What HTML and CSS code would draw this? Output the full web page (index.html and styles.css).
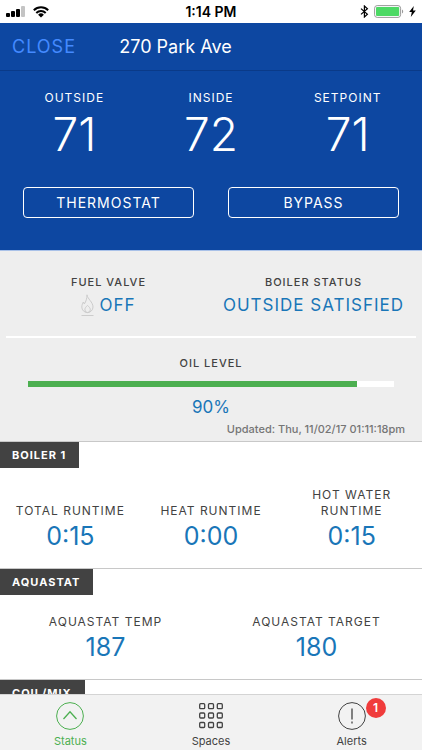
FILE: index.html
```html
<!DOCTYPE html>
<html lang="en">
<head>
    <meta charset="UTF-8">
    <meta name="viewport" content="width=device-width, initial-scale=1.0">
    <title>270 Park Ave</title>
    <link rel="stylesheet" href="styles.css">
</head>
<body>
    <div class="status-bar">
        <div class="status-left">
            <svg width="19" height="12" viewBox="0 0 19 12">
                <rect x="0" y="7" width="4" height="4" rx="1"/>
                <rect x="5" y="5" width="4" height="6" rx="1"/>
                <rect x="10" y="3" width="4" height="8" rx="1"/>
                <rect x="15" y="0" width="4" height="11" rx="1" fill="#c4c4c4"/>
            </svg>
            <svg width="16" height="12" viewBox="0 0 16 12" fill="none" stroke="currentColor" stroke-width="2">
                <path d="M.8 4.3a10.3 10.3 0 0114.4 0"/>
                <path d="M3.3 7a6.7 6.7 0 019.4 0"/>
                <path d="M8 11.6L5.1 8.7a4.1 4.1 0 015.8 0z" fill="currentColor" stroke="none"/>
            </svg>
        </div>
        <span class="status-time">1:14 PM</span>
        <div class="status-right">
            <svg width="9" height="13" viewBox="0 0 9 13" fill="none" stroke="currentColor" stroke-width="1.2">
                <path d="M1 3.6l6.4 5.6-3 2.8V1l3 2.8L1 9.4"/>
            </svg>
            <svg width="30" height="13" viewBox="0 0 30 13">
                <rect x=".6" y=".6" width="26" height="11.8" rx="2.6" fill="#fff" stroke="#999" stroke-width="1"/>
                <rect x="2" y="2" width="23.2" height="9" rx="1" fill="#4cd964"/>
                <path d="M28 4.5c1.6.6 1.6 3.4 0 4z" fill="#999"/>
            </svg>
            <svg width="7" height="11" viewBox="0 0 7 11">
                <path d="M4.8 0L.2 6h2.6L1.8 11 6.8 4.6H4z"/>
            </svg>
        </div>
    </div>

    <header>
        <button class="close-button">CLOSE</button>
        <h1 class="app-title">270 Park Ave</h1>
    </header>

    <main>
        <section class="temps">
            <div class="temps-row">
                <div class="temp">
                    <span class="label">OUTSIDE</span>
                    <span class="temp-value">71</span>
                </div>
                <div class="temp">
                    <span class="label">INSIDE</span>
                    <span class="temp-value">72</span>
                </div>
                <div class="temp">
                    <span class="label">SETPOINT</span>
                    <span class="temp-value">71</span>
                </div>
            </div>
            <div class="temps-buttons">
                <button class="outline-button">THERMOSTAT</button>
                <button class="outline-button">BYPASS</button>
            </div>
        </section>

        <section class="system">
            <div class="system-row">
                <div class="system-item">
                    <span class="label-small">FUEL VALVE</span>
                    <span class="system-value">
                        <svg width="13" height="23" viewBox="0 0 13 23" fill="none" stroke="#cccccc">
                            <path d="M6 .8C6.400 4.800 12 8 12 13a5.600 5.600 0 01-11.200 0c0-2.200 1-3.600 1.500-5 .5.6.8 1.200 1 2C5 7.500 6 4.500 6 .8z"/>
                            <path d="M6.500 11.500c-1.500 1.200-2.600 2.500-2.600 4.300a2.700 2.700 0 005.400 0c0-1.800-1.300-3.100-2.800-4.300z"/>
                            <path d="M.5 21.500h12"/>
                        </svg>
                        OFF
                    </span>
                </div>
                <div class="system-item">
                    <span class="label-small">BOILER STATUS</span>
                    <span class="system-value">OUTSIDE SATISFIED</span>
                </div>
            </div>

            <div class="oil">
                <span class="label-small">OIL LEVEL</span>
                <div class="oil-bar">
                    <div class="oil-fill" style="width: 90%"></div>
                </div>
                <span class="oil-value">90%</span>
            </div>
            <p class="updated">Updated: Thu, 11/02/17 01:11:18pm</p>
        </section>

        <section class="panel">
            <h2 class="panel-tag">BOILER 1</h2>
            <div class="panel-row">
                <div class="stat">
                    <span class="label">TOTAL RUNTIME</span>
                    <span class="stat-value">0:15</span>
                </div>
                <div class="stat">
                    <span class="label">HEAT RUNTIME</span>
                    <span class="stat-value">0:00</span>
                </div>
                <div class="stat">
                    <span class="label">HOT WATER RUNTIME</span>
                    <span class="stat-value">0:15</span>
                </div>
            </div>
        </section>

        <section class="panel">
            <h2 class="panel-tag">AQUASTAT</h2>
            <div class="panel-row panel-row-wide">
                <div class="stat">
                    <span class="label">AQUASTAT TEMP</span>
                    <span class="stat-value">187</span>
                </div>
                <div class="stat">
                    <span class="label">AQUASTAT TARGET</span>
                    <span class="stat-value">180</span>
                </div>
            </div>
        </section>

        <section class="panel">
            <h2 class="panel-tag">COIL/MIX</h2>
        </section>
    </main>

    <nav class="tabs">
        <a href="#status" class="tab tab-active">
            <svg width="28" height="28" viewBox="0 0 28 28" fill="none" stroke="currentColor">
                <circle cx="14" cy="14" r="13.400"/>
                <path d="M7.500 17L14 9.800 20.500 17" stroke-width="1.300"/>
            </svg>
            Status
        </a>
        <a href="#spaces" class="tab">
            <svg width="28" height="28" viewBox="0 0 28 28" fill="none" stroke="currentColor" stroke-width="1.300">
                <rect x="2.700" y="1.700" width="5" height="5" rx="1"/>
                <rect x="11.500" y="1.700" width="5" height="5" rx="1"/>
                <rect x="20.300" y="1.700" width="5" height="5" rx="1"/>
                <rect x="2.700" y="11" width="5" height="5" rx="1"/>
                <rect x="11.500" y="11" width="5" height="5" rx="1"/>
                <rect x="20.300" y="11" width="5" height="5" rx="1"/>
                <rect x="2.700" y="20.500" width="5" height="5" rx="1"/>
                <rect x="11.500" y="20.500" width="5" height="5" rx="1"/>
                <rect x="20.300" y="20.500" width="5" height="5" rx="1"/>
            </svg>
            Spaces
        </a>
        <a href="#alerts" class="tab">
            <span class="tab-icon">
                <svg width="28" height="28" viewBox="0 0 28 28" fill="none" stroke="currentColor">
                    <circle cx="14" cy="14" r="13.400"/>
                    <path d="M14 6.500v11M14 19.500v2" stroke-width="1.300"/>
                </svg>
                <span class="badge">1</span>
            </span>
            Alerts
        </a>
    </nav>
</body>
</html>
```

FILE: styles.css
```css
* {
    margin: 0;
    padding: 0;
    box-sizing: border-box;
}

body {
    font-family: Inter, 'Liberation Sans', sans-serif;
    background-color: white;
    color: #424242;
    height: 100vh;
    display: flex;
    flex-direction: column;
}

button {
    font-family: inherit;
    background: none;
    border: none;
    cursor: pointer;
}

svg {
    display: block;
    flex-shrink: 0;
}

.status-bar {
    display: grid;
    grid-template-columns: 1fr auto 1fr;
    align-items: center;
    height: 23px;
    padding: 0 6px;
    color: black;
}

.status-left,
.status-right {
    display: flex;
    align-items: center;
    gap: 8px;
}

.status-right {
    justify-content: flex-end;
    gap: 5px;
}

.status-time {
    font-size: 14px;
    font-weight: 600;
}

header {
    background-color: #0d47a1;
    border-bottom: 1px solid #0a3a88;
    display: grid;
    grid-template-columns: 1fr auto 1fr;
    align-items: center;
    height: 48px;
    padding: 0 12px;
    /* title sits left of centre */
    padding-right: 83px;
}

.close-button {
    justify-self: start;
    color: #448aff;
    font-size: 18px;
    letter-spacing: 1px;
}

.app-title {
    color: white;
    font-size: 18px;
    font-weight: 400;
}

main {
    flex: 1;
    min-height: 0;
    overflow-y: auto;
    scrollbar-width: none;
}

.label {
    font-size: 12px;
    line-height: 16px;
    letter-spacing: 1px;
}

.label-small {
    font-size: 11px;
    font-weight: 500;
    line-height: 16px;
    letter-spacing: 1px;
}

.temps {
    background-color: #0d47a1;
    color: white;
    padding: 19px 6px 32px;
}

.temps-row {
    display: grid;
    grid-template-columns: repeat(3, 1fr);
}

.temp,
.stat,
.system-item,
.oil {
    display: flex;
    flex-direction: column;
    align-items: center;
    text-align: center;
}

.temp-value {
    font-size: 46px;
    font-weight: 300;
    line-height: 56px;
}

.temps-buttons {
    display: grid;
    grid-template-columns: 1fr 1fr;
    gap: 34px;
    padding: 25px 17px 0;
}

.outline-button {
    height: 31px;
    border: 1px solid white;
    border-radius: 4px;
    color: white;
    font-size: 14px;
    letter-spacing: 1px;
}

.system {
    background-color: #eeeeee;
    border-top: 1px solid #a9c1e8;
    padding: 23px 6px 2px;
}

.system-row {
    display: grid;
    grid-template-columns: 1fr 1fr;
    padding-bottom: 16px;
    border-bottom: 2px solid white;
}

.system-value {
    display: flex;
    align-items: center;
    gap: 5px;
    color: #1976b8;
    font-size: 17px;
    line-height: 30px;
    letter-spacing: 1px;
}

.oil {
    padding: 17px 22px 0;
}

.oil-bar {
    width: 100%;
    height: 6px;
    margin: 10px 0 8px;
    background-color: white;
}

.oil-fill {
    height: 100%;
    background-color: #4caf50;
}

.oil-value {
    color: #1976b8;
    font-size: 17px;
    line-height: 24px;
}

.updated {
    padding-right: 11px;
    color: #757575;
    font-size: 11px;
    font-weight: 500;
    line-height: 20px;
    text-align: right;
}

.panel {
    border-top: 1px solid #c8c8c8;
}

.panel-tag {
    width: fit-content;
    padding: 0 13px 0 12px;
    background-color: #424242;
    color: white;
    font-size: 11px;
    font-weight: 700;
    line-height: 26px;
    letter-spacing: 1px;
}

.panel-row {
    display: grid;
    grid-template-columns: repeat(3, 1fr);
    align-items: end;
    padding: 19px 0 15px;
}

.panel-row-wide {
    grid-template-columns: repeat(2, 1fr);
}

.stat .label {
    padding: 0 10px;
}

.stat-value {
    color: #1976b8;
    font-size: 25px;
    line-height: 34px;
}

.tabs {
    display: grid;
    grid-template-columns: repeat(3, 1fr);
    height: 56px;
    background-color: #f2f2f2;
    border-top: 1px solid #d4d4d4;
}

.tab {
    display: flex;
    flex-direction: column;
    align-items: center;
    gap: 3px;
    padding-top: 7px;
    color: #424242;
    font-size: 11px;
    line-height: 16px;
    text-decoration: none;
}

.tab-active {
    color: #4caf50;
}

.tab-icon {
    position: relative;
}

.badge {
    position: absolute;
    top: -4px;
    left: 28px;
    width: 20px;
    height: 20px;
    border-radius: 50%;
    background-color: #f03c3c;
    color: white;
    font-size: 12px;
    font-weight: 600;
    line-height: 20px;
    text-align: center;
}
```
